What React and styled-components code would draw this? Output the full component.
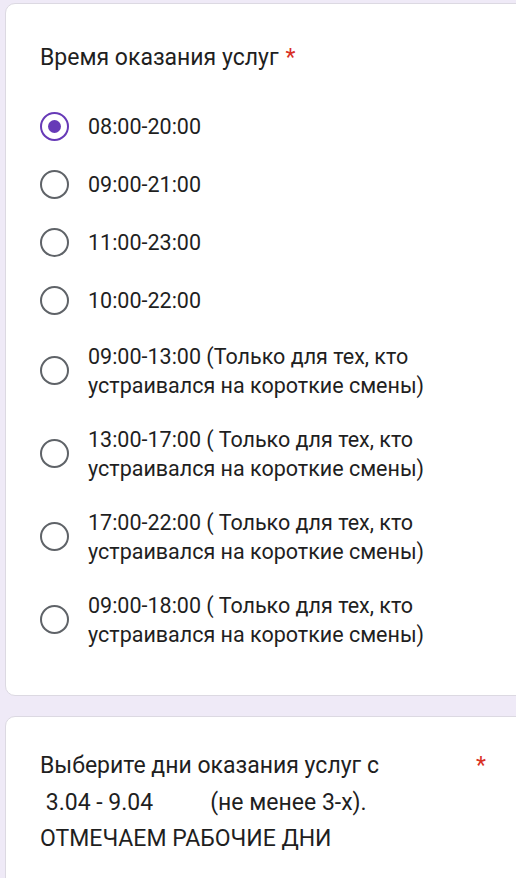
import React from 'react';
import styled, { createGlobalStyle } from 'styled-components';

const GlobalStyle = createGlobalStyle`
  html, body {
    margin: 0;
    padding: 0;
    background: #efeaf7;
    overflow: hidden;
  }
  body {
    font-family: Roboto, "Noto Sans", "Liberation Sans", sans-serif;
    color: #1f1f1f;
  }
`;

const Page = styled.div`
  display: flex;
  flex-direction: column;
  gap: 20px;
  padding: 3px 0 0 5px;
  width: 540px;
`;

const Card = styled.section`
  background: #fff;
  border: 1px solid #dcd9e2;
  border-radius: 10px;
  padding: ${(props) => props.pad};
`;

const Title = styled.div`
  display: flex;
  justify-content: ${(props) => (props.spread ? 'space-between' : 'flex-start')};
  font-size: 23px;
  line-height: ${(props) => props.lh || '29px'};
  white-space: pre-wrap;
  width: ${(props) => (props.spread ? '446px' : 'auto')};
  margin-bottom: ${(props) => props.mb || '0'};
`;

const Star = styled.span`
  color: #d93025;
  margin-left: ${(props) => (props.inline ? '7px' : '0')};
`;

const Options = styled.div`
  display: flex;
  flex-direction: column;
`;

const Row = styled.label`
  display: flex;
  align-items: center;
  gap: 19px;
  padding: 12.5px 0;
  min-height: 33px;
`;

const Radio = styled.span`
  box-sizing: border-box;
  flex: none;
  width: 29px;
  height: 29px;
  border-radius: 50%;
  border: 2.5px solid ${(props) => (props.checked ? '#673ab7' : '#5f6368')};
  display: flex;
  align-items: center;
  justify-content: center;
  &::after {
    content: '';
    display: ${(props) => (props.checked ? 'block' : 'none')};
    width: 13px;
    height: 13px;
    border-radius: 50%;
    background: #673ab7;
  }
`;

const Label = styled.span`
  font-size: 21.5px;
  line-height: 29px;
  width: 345px;
`;

const options = [
  '08:00-20:00',
  '09:00-21:00',
  '11:00-23:00',
  '10:00-22:00',
  '09:00-13:00 (Только для тех, кто устраивался на короткие смены)',
  '13:00-17:00 ( Только для тех, кто устраивался на короткие смены)',
  '17:00-22:00 ( Только для тех, кто устраивался на короткие смены)',
  '09:00-18:00 ( Только для тех, кто устраивался на короткие смены)',
];

const daysTitle =
  'Выберите дни оказания услуг с\n 3.04 - 9.04          (не менее 3-х).\nОТМЕЧАЕМ РАБОЧИЕ ДНИ';

const App = () => {
  return (
    <>
      <GlobalStyle />
      <Page>
        <Card pad="39px 0 34px 34px">
          <Title mb="25px">
            Время оказания услуг<Star inline>*</Star>
          </Title>
          <Options>
            {options.map((item, index) => (
              <Row key={item}>
                <Radio checked={index === 0} />
                <Label>{item}</Label>
              </Row>
            ))}
          </Options>
        </Card>
        <Card pad="31px 0 40px 34px">
          <Title spread lh="36.5px">
            <span>{daysTitle}</span>
            <Star>*</Star>
          </Title>
        </Card>
      </Page>
    </>
  );
};

export default App;
